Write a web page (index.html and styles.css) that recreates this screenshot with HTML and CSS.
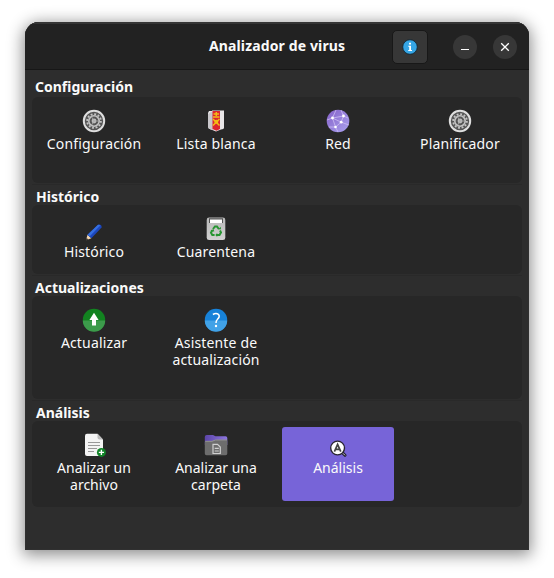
FILE: index.html
```html
<!DOCTYPE html>
<html lang="es">
<head>
<meta charset="utf-8">
<title>Analizador de virus</title>
<link rel="stylesheet" href="styles.css">
</head>
<body>
<svg width="0" height="0" class="defs">
  <defs>
    <linearGradient id="purple" x1="0" y1="0" x2="1" y2="1"><stop offset="0" stop-color="#8460c8"/><stop offset="1" stop-color="#aaa2ee"/></linearGradient>
    <linearGradient id="bin" x1="0" y1="0" x2="0" y2="1"><stop offset="0" stop-color="#b9b9b9"/><stop offset="1" stop-color="#d2d2d2"/></linearGradient>
    <linearGradient id="folder" x1="0" y1="0" x2="1" y2="0"><stop offset="0" stop-color="#5c45a8"/><stop offset="1" stop-color="#8d76e0"/></linearGradient>
    <symbol id="gear" viewBox="0 0 24 24">
      <circle cx="12" cy="12" r="10.2" fill="#555" stroke="#dedede" stroke-width="2"/>
      <circle cx="12" cy="12" r="6.9" fill="none" stroke="#c4c4c4" stroke-width="1.8" stroke-dasharray="1.9 1.713"/>
      <circle cx="12" cy="12" r="5.2" fill="none" stroke="#c4c4c4" stroke-width="1.6"/>
      <circle cx="12" cy="12" r="2.4" fill="#bdbdbd"/>
      <path d="M12 12H17M12 12L9.5 7.7M12 12L9.5 16.3" stroke="#aaa" stroke-width=".8"/>
    </symbol>
  </defs>
</svg>
<main class="window">
  <header class="titlebar">
    <h1>Analizador de virus</h1>
    <button class="info" aria-label="Información"><svg width="16" height="16" viewBox="0 0 16 16"><circle cx="8" cy="8" r="7.3" fill="#35a5e5" stroke="#152631" stroke-width=".9"/><path d="M7 3.8H9V5.5H7ZM6.3 6.8H9V11H10V12H6.2V11H7.2V7.8H6.3Z" fill="#fff"/></svg></button>
    <button class="round minimize" aria-label="Minimizar"><svg width="24" height="24"><path d="M8 14.5H16" stroke="#fff" stroke-width="1.1"/></svg></button>
    <button class="round" aria-label="Cerrar"><svg width="24" height="24"><path d="M8.2 8.2L15.8 15.8M15.8 8.2L8.2 15.8" stroke="#fff" stroke-width="1.3"/></svg></button>
  </header>
  <section class="config">
    <h2>Configuración</h2>
    <div class="panel">
      <div class="item"><svg width="24" height="24"><use href="#gear"/></svg><span>Configuración</span></div>
      <div class="item"><svg width="24" height="24" viewBox="0 0 24 24"><path d="M5 2H8V1.5H20V19Q20 20 17 20.5L12 22.5L7 20.5Q4 20 4 17V4Z" fill="#e9e6e8"/><path d="M4 5V17Q4 20 7 20.5L9 21V3H7Z" fill="#c9c7cb"/><path d="M8.5 2H16V20L12.5 21.7L8.5 20Z" fill="#dc2530"/><path d="M9.5 5H15M12.3 3V7M9 8H15.5M9 10L15.5 16.5M15.5 10L9 16.5" stroke="#f2bd16" stroke-width="1.5"/><circle cx="12.3" cy="12.7" r="2" fill="#f2bd16"/></svg><span>Lista blanca</span></div>
      <div class="item"><svg width="24" height="24" viewBox="0 0 24 24"><circle cx="12" cy="12" r="11.3" fill="url(#purple)"/><path d="M1 11L6.5 9L17.5 7L15.2 13.2L9.5 18L6.5 9L10 1M6.5 9L15.2 13.2L23 16M17.5 7L22 9M17.5 7L15 1M9.5 18L3 18M9.5 18L12 23" fill="none" stroke="#cdbdf3" stroke-width=".8"/><g fill="#fff"><circle cx="6.5" cy="9" r="1.4"/><circle cx="17.5" cy="7" r="1.4"/><circle cx="15.2" cy="13.2" r="1.4"/><circle cx="9.5" cy="18" r="1.3"/></g></svg><span>Red</span></div>
      <div class="item"><svg width="24" height="24"><use href="#gear"/></svg><span>Planificador</span></div>
    </div>
  </section>
  <section>
    <h2 class="indent">Histórico</h2>
    <div class="panel history">
      <div class="item"><svg width="24" height="24" viewBox="0 0 24 24"><path d="M4 23.3L5.5 17.7L9.4 21.3Z" fill="#f1d4b0"/><path d="M4 23.3L4.6 21L6.3 22.5Z" fill="#222"/><path d="M5.5 17.7L16 7.8Q19.5 6.5 19.8 10.2L9.4 21.3Z" fill="#1c47bd"/><path d="M5.5 17.7L16 7.8Q17.5 7.5 18.3 8.4L7.5 19.6Z" fill="#356fe2"/></svg><span>Histórico</span></div>
      <div class="item"><svg width="24" height="24" viewBox="0 0 24 24"><rect x="2.7" y=".5" width="18.6" height="22.6" rx="2.4" fill="url(#bin)"/><path d="M5 1.3H19V6H5Z" fill="#555"/><path d="M6 2.5H18V6H6Z" fill="#fff"/><g fill="none" stroke="#279532" stroke-width="2"><path d="M9 12L11 9.4H13L14.8 12"/><path d="M16 13.5L17 15.5L15.5 18H12.7"/><path d="M10.6 18H8.3L7 15.8L8.3 13.3"/></g><path d="M14 12.5L17 12.3L16.7 9.7ZM13.2 16L11.3 18L13.2 20ZM6.5 13.2L9.7 12.3L10.2 14.7Z" fill="#279532"/></svg><span>Cuarentena</span></div>
    </div>
  </section>
  <section>
    <h2>Actualizaciones</h2>
    <div class="panel updates">
      <div class="item"><svg width="24" height="24" viewBox="0 0 24 24"><circle cx="12" cy="12" r="11.2" fill="#128320"/><path d="M.8 12.5A11.2 11.2 0 0 0 23.2 12.5Z" fill="#3c9b4b"/><path d="M12 4.8L16.6 12H14V17.5H10V12H7.4Z" fill="#fff"/></svg><span>Actualizar</span></div>
      <div class="item"><svg width="24" height="24" viewBox="0 0 24 24"><circle cx="12" cy="12" r="11.2" fill="#1782d9"/><path d="M.8 12.5A11.2 11.2 0 0 0 23.2 12.5Z" fill="#41a2e7"/><path d="M8.9 6.5Q12 4.7 14.4 6.3Q16.5 8.6 13.3 11.5Q12 12.6 12 15" fill="none" stroke="#fff" stroke-width="1.5"/><circle cx="12" cy="18" r="1.2" fill="#fff"/></svg><span>Asistente de<br>actualización</span></div>
    </div>
  </section>
  <section>
    <h2 class="indent">Análisis</h2>
    <div class="panel analysis">
      <div class="item tight"><svg width="24" height="24" viewBox="0 0 24 24"><path d="M5 .8H15.5L21 6.5V21Q21 23 19 23H5Q3 23 3 21V2.8Q3 .8 5 .8Z" fill="#f4f4f4"/><path d="M15.5 .8V4.5Q15.5 6.5 17.5 6.5H21Z" fill="#bcbcbc"/><path d="M6 9.5H18M6 12.5H18M6 15.5H15M6 18.5H12" stroke="#999"/><circle cx="19.4" cy="19.4" r="4.5" fill="#118428"/><path d="M16.8 19.4H22M19.4 16.8V22" stroke="#fff" stroke-width="1.4"/></svg><span>Analizar un<br>archivo</span></div>
      <div class="item tight"><svg width="24" height="24" viewBox="0 0 24 24"><path d="M.8 4Q.8 2 2.8 2H9L11.5 3.2H21.5Q23.3 3.2 23.3 5V12H.8Z" fill="url(#folder)"/><path d="M.8 9Q.8 8 2.5 8H8L11.5 6.7H22Q23.3 6.7 23.3 8V20.5Q23.3 22.3 21.5 22.3H2.5Q.8 22.3 .8 20.5Z" fill="#6d6d6d"/><path d="M1.2 8.3H8L11.5 7H23" fill="none" stroke="#9c9c9c" stroke-width=".8"/><path d="M9 11.4H13.5L16.3 14V20.5H9ZM10.7 15.4H14.8M10.7 18H14.8" fill="none" stroke="#d0d0d0" stroke-width="1.2"/></svg><span>Analizar una<br>carpeta</span></div>
      <div class="item selected"><svg width="24" height="24" viewBox="0 0 24 24"><path d="M16.3 19.6L19 22.3" stroke="#252331" stroke-width="3" stroke-linecap="round"/><circle cx="11.6" cy="15" r="6.9" fill="#fff" stroke="#292532" stroke-width="1.4"/><path d="M8.4 18.7L11.6 11.4L14.8 18.7M9.7 16.4H13.5" fill="none" stroke="#444" stroke-width="1.7"/><path d="M17 20.3L19 22.3" stroke="#c8c8c8" stroke-width="1"/></svg><span>Análisis</span></div>
    </div>
  </section>
</main>
</body>
</html>
```
FILE: styles.css
```css
* { box-sizing: border-box; }
body { margin: 0; padding: 22px 0 0 25px; height: 578px; overflow: hidden; background: #fff; color: #fafafa; font: 14px/17px "Noto Sans", sans-serif; }
.defs { display: block; height: 0; }
.window { width: 504px; height: 528px; border-radius: 14px 14px 0 0; background: #2d2d2d; box-shadow: 0 3px 16px 2px rgba(0,0,0,.45), inset 0 0 0 1px #303030; overflow: hidden; }
.titlebar { display: flex; align-items: center; height: 48px; padding: 0 12px; border-top: 2px solid #353535; border-bottom: 1px solid #171717; background: #222; }
h1 { width: 136px; margin: 0 47px 2px 172px; font-size: 14px; line-height: 20px; white-space: nowrap; letter-spacing: .13px; }
button { display: grid; place-items: center; flex: none; padding: 0; border: 0; color: #fff; background: #373737; }
button svg, .item svg { display: block; }
.info { width: 36px; height: 34px; margin-right: 25px; border: 1px solid #181818; border-radius: 5px; }
.round { width: 24px; height: 24px; border-radius: 50%; }
.minimize { margin-right: 16px; }
section { padding: 0 7px; }
h2 { margin: 0; padding: 4px 0 0 3px; height: 22px; border-top: 0; font-size: 14px; line-height: 20px; }
section + section h2 { padding-top: 2px; border-top: 1px solid #292929; border-width: 1px 0 0; }
section + section { padding-top: 1px; }
section + section h2 { height: 21px; }
h2.indent { padding-left: 4px; }
.panel { display: flex; gap: 10px; padding: 5px 6px; border-radius: 6px; background: #272727; }
.config { padding-top: 5px; }
.config h2 { padding-top: 2px; }
.config .panel { height: 86px; }
.history { height: 69px; }
.updates { height: 103px; }
.analysis { height: 86px; padding-top: 6px; }
.item { width: 112px; height: 74px; padding-top: 7px; display: flex; flex-direction: column; align-items: center; gap: 2px; border-radius: 3px; text-align: center; white-space: nowrap; letter-spacing: .15px; }
.analysis .item { padding-top: 6px; letter-spacing: 0; }
.selected { background: #7764d8; }
```
